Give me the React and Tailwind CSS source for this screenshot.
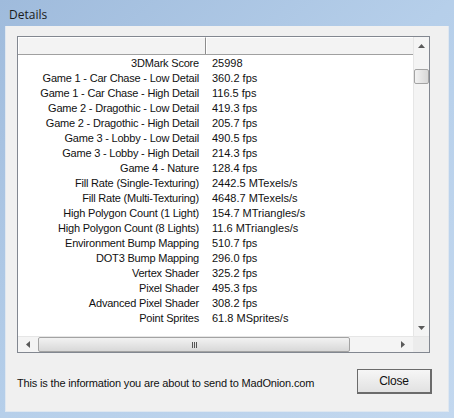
const rows = [
  ['3DMark Score', '25998'],
  ['Game 1 - Car Chase - Low Detail', '360.2 fps'],
  ['Game 1 - Car Chase - High Detail', '116.5 fps'],
  ['Game 2 - Dragothic - Low Detail', '419.3 fps'],
  ['Game 2 - Dragothic - High Detail', '205.7 fps'],
  ['Game 3 - Lobby - Low Detail', '490.5 fps'],
  ['Game 3 - Lobby - High Detail', '214.3 fps'],
  ['Game 4 - Nature', '128.4 fps'],
  ['Fill Rate (Single-Texturing)', '2442.5 MTexels/s'],
  ['Fill Rate (Multi-Texturing)', '4648.7 MTexels/s'],
  ['High Polygon Count (1 Light)', '154.7 MTriangles/s'],
  ['High Polygon Count (8 Lights)', '11.6 MTriangles/s'],
  ['Environment Bump Mapping', '510.7 fps'],
  ['DOT3 Bump Mapping', '296.0 fps'],
  ['Vertex Shader', '325.2 fps'],
  ['Pixel Shader', '495.3 fps'],
  ['Advanced Pixel Shader', '308.2 fps'],
  ['Point Sprites', '61.8 MSprites/s'],
]

// 小さい三角の矢印
const Arrow = ({ dir }) => {
  const pts = {
    up: '0,4 3.5,0 7,4',
    down: '0,0 3.5,4 7,0',
    left: '4,0 0,3.5 4,7',
    right: '0,0 4,3.5 0,7',
  }[dir]
  const vertical = dir === 'up' || dir === 'down'
  return (
    <svg width={vertical ? 7 : 4} height={vertical ? 4 : 7} className="block">
      <polygon points={pts} fill="#5a5a5a" />
    </svg>
  )
}

export default function App() {
  return (
    <div
      className="w-[454px] h-[418px] bg-gradient-to-br from-[#9fbbdc] via-[#b6cfea] to-[#c3d8ef] overflow-hidden"
      style={{ fontFamily: '"Liberation Sans", Arial, sans-serif' }}
    >
      {/* タイトル */}
      <div
        className="h-[26px] pl-[9px] pt-[3px] flex items-center text-[12px] text-[#1b1b1b]"
        style={{ fontFamily: '"Open Sans", "Noto Sans", sans-serif' }}
      >
        Details
      </div>

      {/* クライアント領域 */}
      <div className="mx-[5px] h-[386px] bg-[#f0f0f0] pt-[10px] pl-[11px] border border-[#dfe7f0] border-t-0">
        {/* リスト */}
        <div className="w-[413px] h-[317px] border border-[#828790] bg-white flex flex-col">
          <div className="flex h-[299px]">
            <div className="flex-1 flex flex-col">
              <div className="h-[18px] flex border-b border-[#a0a0a0] bg-[#f3f3f3]">
                <div className="w-[188px] border-r border-[#8c8c8c] border-t border-l border-t-white border-l-white" />
                <div className="flex-1 border-t border-l border-t-white border-l-white" />
              </div>
              <div className="flex-1 text-[11px] text-[#111] pt-[1px]">
                {rows.map(([label, value]) => (
                  <div key={label} className="h-[15px] flex items-center leading-none">
                    <div className="w-[188px] text-right pr-[7px] whitespace-nowrap tracking-[-0.2px]">{label}</div>
                    <div className="pl-[6px] whitespace-nowrap">{value}</div>
                  </div>
                ))}
              </div>
            </div>
            {/* 縦スクロールバー */}
            <div className="w-[16px] bg-[#f4f4f4] border-l border-[#e6e6e6] flex flex-col items-center">
              <div className="h-[17px] flex items-center justify-center">
                <Arrow dir="up" />
              </div>
              <div className="mt-[15px] w-[15px] h-[15px] rounded-[2px] border border-[#a3a3a3] bg-gradient-to-r from-[#f2f2f2] to-[#d8d8d8]" />
              <div className="flex-1" />
              <div className="h-[17px] flex items-center justify-center">
                <Arrow dir="down" />
              </div>
            </div>
          </div>
          {/* 横スクロールバー */}
          <div className="h-[16px] flex bg-[#f4f4f4] border-t border-[#e6e6e6]">
            <div className="flex-1 flex items-center">
              <div className="w-[20px] flex justify-center">
                <Arrow dir="left" />
              </div>
              <div className="w-[312px] h-[15px] rounded-[2px] border border-[#a3a3a3] bg-gradient-to-b from-[#f2f2f2] to-[#d8d8d8] flex items-center justify-center gap-[1px]">
                <div className="w-[1px] h-[6px] bg-[#555]" />
                <div className="w-[1px] h-[6px] bg-[#555]" />
                <div className="w-[1px] h-[6px] bg-[#555]" />
              </div>
              <div className="flex-1" />
              <div className="w-[20px] flex justify-center">
                <Arrow dir="right" />
              </div>
            </div>
            <div className="w-[16px] bg-[#ececec]" />
          </div>
        </div>

        {/* フッター */}
        <div className="mt-[16px] w-[415px] flex items-center justify-between">
          <div className="text-[11px] tracking-[-0.16px] text-[#111] pt-[3px]">
            This is the information you are about to send to MadOnion.com
          </div>
          <div className="w-[75px] h-[25px] border border-[#6b6b6b] border-r-2 border-b-2 bg-gradient-to-b from-[#f6f6f6] to-[#e2e2e2] flex items-center justify-center text-[12px] tracking-[-0.2px] text-[#111]">
            Close
          </div>
        </div>
      </div>
    </div>
  )
}
